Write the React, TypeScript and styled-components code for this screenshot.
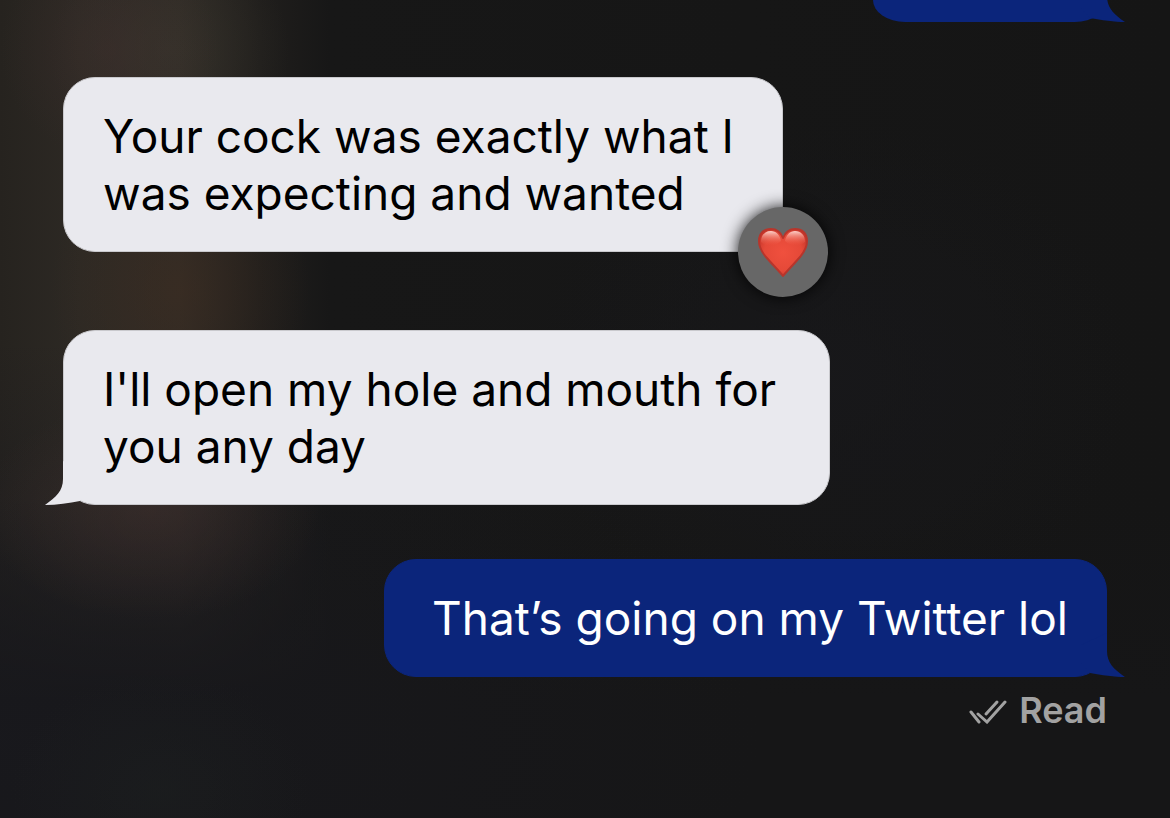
import React from 'react';
import styled, { createGlobalStyle, css } from 'styled-components';

const RECEIVED = '#e9e9ee';
const SENT = '#0b257b';

const GlobalStyle = createGlobalStyle`
  *, *::before, *::after { box-sizing: border-box; }
  body {
    margin: 0;
    background: #151515;
    font-family: Inter, "Liberation Sans", sans-serif;
  }
`;

const Thread = styled.main`
  display: flex;
  flex-direction: column;
  min-height: 100vh;
  padding: 0 63px 80px;
  overflow: hidden;
  background:
    radial-gradient(ellipse 110px 110px at 110px 50px, rgba(66, 46, 46, 0.35), transparent),
    radial-gradient(ellipse 120px 110px at 170px 50px, rgba(60, 58, 48, 0.45), transparent),
    radial-gradient(ellipse 130px 140px at 180px 290px, rgba(66, 46, 32, 0.45), transparent),
    radial-gradient(ellipse 170px 110px at 150px 510px, rgba(68, 50, 48, 0.45), transparent),
    radial-gradient(ellipse 150px 120px at 160px 790px, rgba(30, 34, 33, 0.4), transparent),
    radial-gradient(ellipse 760px 400px at 0 740px, rgba(25, 25, 30, 0.8), transparent),
    radial-gradient(ellipse 300px 260px at 830px 380px, rgba(24, 24, 27, 0.8), transparent),
    linear-gradient(to bottom, transparent 500px, #161617 700px),
    linear-gradient(to right, #26231f 0, #2d2924 80px, #2f2a25 180px, #201e1c 260px, #171717 330px, #151515 100%);
`;

const Message = styled.article<{ $sent?: boolean; $width: number; $gap: number }>`
  position: relative;
  width: ${({ $width }) => $width}px;
  max-width: 100%;
  margin-top: ${({ $gap }) => $gap}px;
  padding: 30px 38px 29px 39px;
  border: 1px solid #c9c9cd;
  border-radius: 32px;
  background: ${RECEIVED};
  color: #000;
  font-size: 46px;
  line-height: 57px;

  ${({ $sent }) =>
    $sent &&
    css`
      align-self: flex-end;
      border-color: ${SENT};
      background: ${SENT};
      color: #fff;
      text-align: right;
    `}
`;

const EarlierMessage = styled.div`
  position: relative;
  align-self: flex-end;
  width: 234px;
  height: 22px;
  background: ${SENT};
  border-radius: 0 0 32px 32px / 0 0 22px 22px;
`;

const Text = styled.p`
  margin: 0;
`;

const TailShape = styled.svg<{ $sent?: boolean; $inset: number }>`
  position: absolute;
  bottom: -${({ $inset }) => $inset}px;
  width: 44px;
  height: 44px;
  fill: ${({ $sent }) => ($sent ? SENT : RECEIVED)};
  ${({ $sent, $inset }) =>
    $sent ? `right: -${18 + $inset}px;` : `left: -${18 + $inset}px;`}
`;

const Reaction = styled.div`
  position: absolute;
  right: -46px;
  bottom: -46px;
  display: grid;
  place-items: center;
  width: 90px;
  height: 90px;
  border-radius: 50%;
  background: #676767;
  box-shadow: 0 0 16px rgba(0, 0, 0, 0.9);
`;

const Receipt = styled.div`
  display: flex;
  align-items: center;
  align-self: flex-end;
  gap: 12px;
  margin-top: 11px;
  color: #a2a2a2;
  font-size: 36px;
  font-weight: 600;
  line-height: 44px;
`;

const TickIcon = styled.svg`
  width: 38px;
  height: 28px;
`;

function Tail({ sent, inset = 1 }: { sent?: boolean; inset?: number }) {
  return (
    <TailShape $sent={sent} $inset={inset} viewBox="0 0 44 44" aria-hidden="true">
      {sent ? (
        <path d="M26 0V18C26 29 32 36 44 44C34 44 20 42 9 40L0 30V12Z" />
      ) : (
        <path d="M18 0V18C18 30 11 36 0 44C12 44 24 42 35 40L44 30V12Z" />
      )}
    </TailShape>
  );
}

function Heart() {
  return (
    <svg width="50" height="52" viewBox="0 0 50 52" role="img" aria-label="Loved">
      <defs>
        <radialGradient id="heartBody" cx="0.5" cy="0.5" r="0.6">
          <stop offset="0" stopColor="#f0503e" />
          <stop offset="0.65" stopColor="#e54938" />
          <stop offset="1" stopColor="#c53429" />
        </radialGradient>
        <linearGradient id="heartShine" x1="0" y1="0" x2="0" y2="1">
          <stop offset="0" stopColor="#ffd9d2" stopOpacity="0.95" />
          <stop offset="1" stopColor="#f2553f" stopOpacity="0" />
        </linearGradient>
      </defs>
      <path
        d="M25 50C21 45 14 38 8 31C3 25 1 21 1 15C1 7 6 3 13 3C19 3 23 7 25 12C27 7 31 3 37 3C44 3 49 7 49 15C49 21 47 25 42 31C36 38 29 45 25 50Z"
        fill="url(#heartBody)"
        stroke="#b8352b"
        strokeWidth="2"
        strokeLinejoin="round"
      />
      <path d="M3 16C3 9 7 5 13 5C18 5 22 9 23 15C17 21 8 21 3 16Z" fill="url(#heartShine)" />
      <path d="M27 15C28 9 32 5 37 5C43 5 47 9 47 16C42 21 33 21 27 15Z" fill="url(#heartShine)" />
    </svg>
  );
}

export default function App() {
  return (
    <>
      <GlobalStyle />
      <Thread>
        <EarlierMessage>
          <Tail sent inset={0} />
        </EarlierMessage>

        <Message $width={720} $gap={55}>
          <Text>Your cock was exactly what I was expecting and wanted</Text>
          <Reaction>
            <Heart />
          </Reaction>
        </Message>

        <Message $width={767} $gap={78}>
          <Tail />
          <Text>I'll open my hole and mouth for you any day</Text>
        </Message>

        <Message $sent $width={723} $gap={54}>
          <Tail sent />
          <Text>That’s going on my Twitter lol</Text>
        </Message>

        <Receipt>
          <TickIcon
            viewBox="0 -4 38 28"
            fill="none"
            stroke="currentColor"
            strokeWidth="3"
            strokeLinecap="round"
            aria-hidden="true"
          >
            <path d="M9 14L18 22L36 2" />
            <path d="M2 12L10 22" />
            <path d="M17 14L28 2" />
          </TickIcon>
          <span>Read</span>
        </Receipt>
      </Thread>
    </>
  );
}
